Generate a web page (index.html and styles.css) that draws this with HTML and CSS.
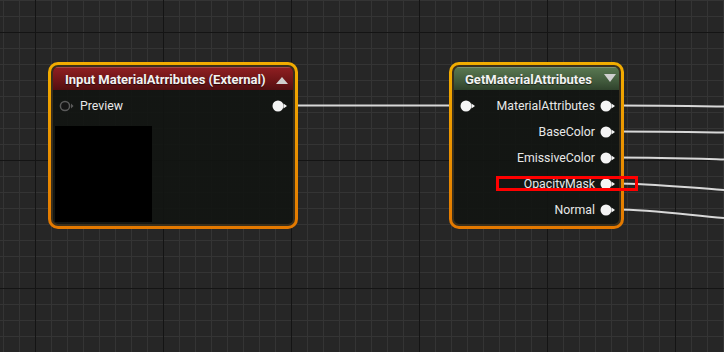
FILE: index.html
```html
<!DOCTYPE html>
<html lang="en">
<head>
    <meta charset="UTF-8">
    <title>Material Graph</title>
    <link rel="stylesheet" href="styles.css">
</head>
<body>
<div class="graph">
    <svg class="wires" width="724" height="352" viewBox="0 0 724 352">
        <path d="M288 105.5 L460 105.5" />
        <path d="M615 105.5 C660 105.5, 690 106, 724 106.5" />
        <path d="M615 131.5 C660 131.5, 690 132, 724 132.5" />
        <path d="M615 157.5 C660 157.5, 690 158.5, 724 159.5" />
        <path d="M615 183.5 C650 183.5, 680 187, 724 190" />
        <path d="M615 209.5 C650 209.5, 680 214, 724 218" />
    </svg>

    <!-- Eingangsknoten -->
    <div class="node node-input">
        <div class="node-inner">
            <div class="node-head head-red">
                <span class="title">Input MaterialAtrributes (External)</span>
                <span class="tri tri-up"></span>
            </div>
            <div class="node-body">
                <div class="row">
                    <svg class="pin pin-empty" width="16" height="12" viewBox="0 0 16 12"><circle cx="6" cy="6" r="4.6" /><polygon points="12,3.5 14.5,6 12,8.5" /></svg>
                    <span class="label label-left">Preview</span>
                    <svg class="pin pin-out" width="16" height="12" viewBox="0 0 16 12"><circle cx="6" cy="6" r="5.5" /><polygon points="11.5,3.5 15,6 11.5,8.5" /></svg>
                </div>
                <div class="preview"></div>
            </div>
        </div>
    </div>

    <!-- GetMaterialAttributes -->
    <div class="node node-get">
        <div class="node-inner">
            <div class="node-head head-green">
                <span class="title">GetMaterialAttributes</span>
                <span class="tri tri-down"></span>
            </div>
            <div class="node-body">
                <div class="row">
                    <svg class="pin pin-in" width="16" height="12" viewBox="0 0 16 12"><circle cx="6" cy="6" r="5.5" /><polygon points="11.5,3.5 15,6 11.5,8.5" /></svg>
                    <span class="label">MaterialAttributes</span>
                    <svg class="pin" width="16" height="12" viewBox="0 0 16 12"><circle cx="6" cy="6" r="5.5" /><polygon points="11.5,3.5 15,6 11.5,8.5" /></svg>
                </div>
                <div class="row">
                    <span class="label">BaseColor</span>
                    <svg class="pin" width="16" height="12" viewBox="0 0 16 12"><circle cx="6" cy="6" r="5.5" /><polygon points="11.5,3.5 15,6 11.5,8.5" /></svg>
                </div>
                <div class="row">
                    <span class="label">EmissiveColor</span>
                    <svg class="pin" width="16" height="12" viewBox="0 0 16 12"><circle cx="6" cy="6" r="5.5" /><polygon points="11.5,3.5 15,6 11.5,8.5" /></svg>
                </div>
                <div class="row">
                    <span class="label">OpacityMask</span>
                    <svg class="pin" width="16" height="12" viewBox="0 0 16 12"><circle cx="6" cy="6" r="5.5" /><polygon points="11.5,3.5 15,6 11.5,8.5" /></svg>
                </div>
                <div class="row">
                    <span class="label">Normal</span>
                    <svg class="pin" width="16" height="12" viewBox="0 0 16 12"><circle cx="6" cy="6" r="5.5" /><polygon points="11.5,3.5 15,6 11.5,8.5" /></svg>
                </div>
            </div>
        </div>
    </div>

    <div class="highlight"></div>
</div>
</body>
</html>
```

FILE: styles.css
```css
html, body {
    margin: 0;
    padding: 0;
}
body {
    font-family: Roboto, "Liberation Sans", sans-serif;
    background-color: #262626;
    overflow: hidden;
}
.graph {
    position: relative;
    width: 724px;
    height: 352px;
    background-color: #262626;
    background-image:
        linear-gradient(to right, #141414 1px, transparent 1px),
        linear-gradient(to bottom, #141414 1px, transparent 1px),
        linear-gradient(to right, #343434 1px, transparent 1px),
        linear-gradient(to bottom, #343434 1px, transparent 1px);
    background-size: 128px 128px, 128px 128px, 16px 16px, 16px 16px;
    background-position: 35px 0, 0 32px, 3px 0, 0 0;
}
.wires {
    position: absolute;
    left: 0;
    top: 0;
}
.wires path {
    fill: none;
    stroke: #d8d8d8;
    stroke-width: 2;
}

/* Knoten */
.node {
    position: absolute;
    top: 62px;
    height: 167px;
    box-sizing: border-box;
    padding: 3px;
    border-radius: 10px;
    background: linear-gradient(#f2ad00, #e37800);
}
.node-input {
    left: 48px;
    width: 250px;
}
.node-get {
    left: 449px;
    width: 175px;
}
.node-inner {
    height: 100%;
    box-sizing: border-box;
    border: 2px solid #3a2f1c;
    border-radius: 7px;
    /* Raster scheint leicht durch den Knoten */
    background-color: #262626;
    background-image:
        linear-gradient(rgba(17, 20, 17, 0.9), rgba(17, 20, 17, 0.9)),
        linear-gradient(to right, #141414 1px, transparent 1px),
        linear-gradient(to bottom, #141414 1px, transparent 1px),
        linear-gradient(to right, #343434 1px, transparent 1px),
        linear-gradient(to bottom, #343434 1px, transparent 1px);
    background-size: 100% 100%, 128px 128px, 128px 128px, 16px 16px, 16px 16px;
    background-position: 0 0, 35px 0, 0 32px, 3px 0, 0 0;
    background-attachment: fixed;
    display: flex;
    flex-direction: column;
    overflow: hidden;
}
.node-head {
    height: 23px;
    box-sizing: border-box;
    padding-top: 2px;
    display: flex;
    align-items: center;
    flex-shrink: 0;
}
.head-red {
    padding-left: 12px;
    background: linear-gradient(#901f22, #6e1517 60%, #520f11);
    box-shadow: inset 0 1px 0 rgba(255, 255, 255, 0.18);
}
.head-green {
    padding-left: 11px;
    background: linear-gradient(#5a7952, #425b3d 60%, #2f422c);
    box-shadow: inset 0 1px 0 rgba(255, 255, 255, 0.2);
}
.title {
    color: #f2f2f2;
    font-size: 13px;
    font-weight: bold;
    white-space: nowrap;
    text-shadow: 0 1px 1px rgba(0, 0, 0, 0.6);
}
.tri {
    width: 0;
    height: 0;
    margin-left: auto;
}
.tri-up {
    margin-right: 5px;
    border-left: 6px solid transparent;
    border-right: 6px solid transparent;
    border-bottom: 7px solid #cfcfcf;
    margin-top: 1px;
}
.tri-down {
    margin-right: 3px;
    border-left: 6px solid transparent;
    border-right: 6px solid transparent;
    border-top: 8px solid #cfcfcf;
    margin-top: -4px;
}
.node-body {
    padding-top: 3px;
}
.row {
    height: 26px;
    display: flex;
    align-items: center;
    justify-content: flex-end;
}
.node-input .row {
    padding: 0 5px 0 6px;
}
.node-get .row {
    padding: 0 3px 0 6px;
}
.label {
    color: #e8e8e8;
    font-size: 12.3px;
    margin-right: 5px;
    white-space: nowrap;
}
.label-left {
    margin-left: 5px;
    margin-right: auto;
}
.pin circle,
.pin polygon {
    fill: #f4f4f4;
}
.pin-empty circle {
    fill: #151515;
    stroke: #5a5a5a;
    stroke-width: 1.5;
}
.pin-empty polygon {
    fill: #5a5a5a;
}
.pin-in {
    margin-right: auto;
}
.preview {
    width: 97px;
    height: 96px;
    margin: 7px 0 0 2px;
    background: #000;
}

/* Markierung */
.highlight {
    position: absolute;
    left: 496px;
    top: 176px;
    width: 142px;
    height: 15px;
    box-sizing: border-box;
    border: 3px solid #ff0000;
}
```
